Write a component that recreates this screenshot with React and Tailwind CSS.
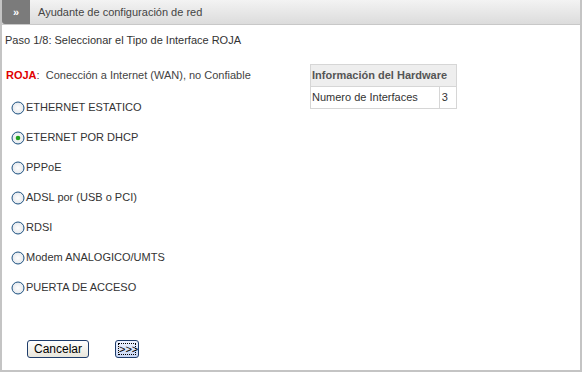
import React, { useState } from 'react';

const options = [
  'ETHERNET ESTATICO',
  'ETERNET POR DHCP',
  'PPPoE',
  'ADSL por (USB o PCI)',
  'RDSI',
  'Modem ANALOGICO/UMTS',
  'PUERTA DE ACCESO',
];

function Radio({ checked }) {
  return (
    <svg width="14" height="14" viewBox="0 0 14 14" className="shrink-0">
      <defs>
        <radialGradient id="rg" cx="0.5" cy="0.5" r="0.6">
          <stop offset="0" stopColor="#ffffff" />
          <stop offset="1" stopColor="#dfe3e8" />
        </radialGradient>
      </defs>
      <circle cx="7" cy="7" r="6" fill="url(#rg)" stroke="#1c5180" strokeWidth="1" />
      {checked && <circle cx="7" cy="7" r="2.3" fill="#21a121" />}
    </svg>
  );
}

export default function App() {
  const [selected, setSelected] = useState(1);

  return (
    <div className="w-[584px] h-[376px] bg-white" style={{ fontFamily: '"Liberation Sans", Arial, sans-serif' }}>
      <div className="w-[582px] h-[372px] border-2 border-t-0 border-[#c4c4c4] flex flex-col">
        <div className="h-[25px] flex border-b border-[#c8c8c8] bg-gradient-to-b from-[#f3f3f3] to-[#dcdcdc]">
          <div className="w-[28px] bg-[#7b7b7b] rounded-bl-[3px] flex items-center justify-center text-white text-[11px] font-bold">
            »
          </div>
          <div className="pl-[8px] flex items-center text-[11px] text-[#444]">Ayudante de configuración de red</div>
        </div>

        <div className="pl-[3px] pt-[7px] text-[11px] text-[#333]">Paso 1/8: Seleccionar el Tipo de Interface ROJA</div>

        <div className="flex pl-[4px] pt-[19px]">
          <div className="w-[304px]">
            <div className="text-[11px] text-[#444] h-[14px] leading-[14px]">
              <span className="text-[#e00000] font-bold">ROJA</span>:&nbsp;&nbsp;Conección a Internet (WAN), no Confiable
            </div>
            <div className="flex flex-col gap-[16px] pt-[19px] pl-[5px]">
              {options.map((o, i) => (
                <label
                  key={o}
                  onClick={() => setSelected(i)}
                  className="flex items-center h-[14px] text-[11px] text-[#333] cursor-pointer"
                >
                  <Radio checked={selected === i} />
                  <span className="ml-[1px]">{o}</span>
                </label>
              ))}
            </div>
          </div>

          <div>
            <table className="border-collapse text-[11px] text-[#333] mt-[-4px]">
              <thead>
                <tr>
                  <th colSpan={2} className="border border-[#d6d6d6] bg-[#eeeeee] h-[22px] px-[1px] text-left font-bold text-[#555]">
                    Información del Hardware
                  </th>
                </tr>
              </thead>
              <tbody>
                <tr>
                  <td className="border border-[#d6d6d6] h-[22px] pl-[1px] pr-[21px]">Numero de Interfaces</td>
                  <td className="border border-[#d6d6d6] pl-[2px] pr-[8px]">3</td>
                </tr>
              </tbody>
            </table>
          </div>
        </div>

        <div className="mt-auto mb-[12px] flex items-center pl-[25px]">
          <button className="w-[62px] h-[18px] rounded-[3px] border border-[#1f3d6b] bg-gradient-to-b from-[#ffffff] to-[#e8e6dc] text-[12px] text-black leading-none">
            Cancelar
          </button>
          <button className="ml-[26px] w-[24px] h-[18px] rounded-[3px] border border-[#1f3d6b] bg-gradient-to-b from-[#eef3ff] to-[#c9d7f5] text-[11px] text-black leading-none p-[2px]">
            <span className="block border border-dotted border-black h-full leading-[11px]">&gt;&gt;&gt;</span>
          </button>
        </div>
      </div>
    </div>
  );
}
